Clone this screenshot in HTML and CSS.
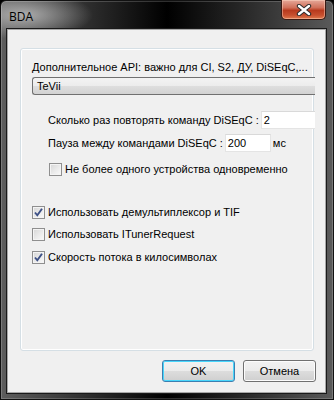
FILE: index.html
```html
<!DOCTYPE html>
<html lang="ru">
<head>
    <meta charset="UTF-8">
    <title>BDA</title>
    <link rel="stylesheet" href="styles.css">
</head>
<body>
    <div class="window">
        <div class="titlebar">
            <span class="title">BDA</span>
            <span class="close">
                <svg width="16" height="12" viewBox="0 0 16 12">
                    <path d="M3 2 L13 10 M13 2 L3 10" stroke="#2b2b2b" stroke-width="4.4" stroke-linecap="round"/>
                    <path d="M3 2 L13 10 M13 2 L3 10" stroke="#ffffff" stroke-width="2.4" stroke-linecap="round"/>
                </svg>
            </span>
        </div>
        <div class="client">
            <div class="group">
                <div class="caption">Дополнительное API: важно для CI, S2, ДУ, DiSEqC,...</div>
                <div class="combo">TeVii</div>

                <div class="sub">
                    <div class="row">
                        <span class="label">Сколько раз повторять команду DiSEqC :</span>
                        <span class="edit wide">2</span>
                    </div>
                    <div class="row second">
                        <span class="label">Пауза между командами DiSEqC :</span>
                        <span class="edit short">200</span>
                        <span class="unit">мс</span>
                    </div>
                    <div class="check-row single">
                        <span class="box"></span>
                        <span>Не более одного устройства одновременно</span>
                    </div>
                </div>

                <div class="options">
                    <div class="check-row">
                        <span class="box">
                            <svg width="11" height="11" viewBox="0 0 11 11"><path d="M2 5.5 L4.3 8.3 L9 1.8" fill="none" stroke="#3d5086" stroke-width="1.9"/></svg>
                        </span>
                        <span>Использовать демультиплексор и TIF</span>
                    </div>
                    <div class="check-row">
                        <span class="box"></span>
                        <span>Использовать ITunerRequest</span>
                    </div>
                    <div class="check-row last">
                        <span class="box">
                            <svg width="11" height="11" viewBox="0 0 11 11"><path d="M2 5.5 L4.3 8.3 L9 1.8" fill="none" stroke="#3d5086" stroke-width="1.9"/></svg>
                        </span>
                        <span>Скорость потока в килосимволах</span>
                    </div>
                </div>
            </div>

            <div class="buttons">
                <span class="btn default">OK</span>
                <span class="btn">Отмена</span>
            </div>
        </div>
    </div>
</body>
</html>
```

FILE: styles.css
```css
body {
    margin: 0;
    background: #000;
    font-family: "Liberation Sans", Arial, sans-serif;
    font-size: 11px;
    color: #000;
}
.window {
    box-sizing: border-box;
    width: 334px;
    height: 400px;
    padding: 0 7px 6px 6px;
    border: 1px solid #111;
    border-radius: 6px 6px 0 0;
    display: flex;
    flex-direction: column;
    background:
        radial-gradient(ellipse 70px 24px at 22px 14px, rgba(190,190,190,0.85), rgba(190,190,190,0) 100%),
        linear-gradient(90deg, #5e5e5e 0%, #303030 25%, #000 50%, #262626 72%, #5a5a5a 100%);
    box-shadow: inset 0 0 0 1px rgba(255,255,255,0.18);
}
.titlebar {
    height: 28px;
    display: flex;
    align-items: flex-start;
}
.title {
    margin: 7px 0 0 2px;
    font-family: "Open Sans", "Liberation Sans", sans-serif;
    font-size: 12px;
    color: #000;
}
.close {
    margin-left: auto;
    margin-top: -1px;
    width: 45px;
    height: 20px;
    box-sizing: border-box;
    border: 1px solid #3a1a14;
    border-top: none;
    border-radius: 0 0 5px 5px;
    display: flex;
    align-items: center;
    justify-content: center;
    background: linear-gradient(180deg, #e5a899 0%, #d0705a 40%, #b83a1e 55%, #c8502f 80%, #e07a4e 100%);
    box-shadow: inset 0 0 0 1px rgba(255,220,200,0.45);
}
.client {
    flex: 1;
    background: #f0f0f0;
    border: 1px solid #a8a8a8;
    box-shadow: 0 0 0 1px #1a1a1a;
    display: flex;
    flex-direction: column;
}
.group {
    box-sizing: border-box;
    height: 303px;
    margin: 18px 11px 0 12px;
    padding: 11px 0 0 11px;
    border: 1px solid #d5dfe5;
    border-radius: 3px;
    box-shadow: inset 0 0 0 1px #fff;
}
.caption {
    line-height: 14px;
    white-space: nowrap;
}
.combo {
    box-sizing: border-box;
    height: 18px;
    margin: 3px -2px 0 0;
    padding-left: 4px;
    line-height: 16px;
    border: 1px solid #707070;
    border-right: none;
    border-radius: 3px 0 0 3px;
    background: linear-gradient(180deg, #f3f3f3 0%, #ececec 50%, #dedede 50%, #d2d2d2 100%);
}
.sub {
    padding-left: 16px;
}
.row {
    display: flex;
    align-items: center;
    height: 18px;
    margin-top: 16px;
    white-space: nowrap;
}
.row.second {
    margin-top: 5px;
}
.edit {
    box-sizing: border-box;
    height: 18px;
    margin-left: 2px;
    padding-left: 2px;
    line-height: 16px;
    background: #fff;
    border: 1px solid #e4e4e4;
    border-top-color: #d9d9d9;
}
.edit.wide {
    flex: 1;
    margin-right: -2px;
    border-right: none;
}
.edit.short {
    width: 46px;
}
.unit {
    margin-left: 2px;
}
.check-row {
    display: flex;
    align-items: center;
    height: 14px;
    margin-top: 8px;
    white-space: nowrap;
}
.check-row.single {
    margin-top: 10px;
    margin-left: 1px;
}
.check-row.last {
    margin-top: 9px;
}
.options {
    margin-top: 29px;
}
.box {
    box-sizing: border-box;
    width: 13px;
    height: 13px;
    margin-right: 3px;
    border: 1px solid #8f8f8f;
    display: flex;
    align-items: center;
    justify-content: center;
    background: linear-gradient(135deg, #d6d6d6 0%, #e9e9e9 50%, #fafafa 100%);
    box-shadow: inset 0 0 0 1px #f4f4f4;
}
.buttons {
    display: flex;
    justify-content: flex-end;
    gap: 8px;
    margin: 9px 9px 0 0;
}
.btn {
    box-sizing: border-box;
    width: 73px;
    height: 22px;
    display: flex;
    align-items: center;
    justify-content: center;
    border: 1px solid #707070;
    border-radius: 3px;
    background: linear-gradient(180deg, #f2f2f2 0%, #ebebeb 50%, #dddddd 50%, #cfcfcf 100%);
    box-shadow: inset 0 0 0 1px #fcfcfc;
}
.btn.default {
    border-color: #3c7fb1;
    box-shadow: inset 0 0 0 1px #48d6fb;
}
```
